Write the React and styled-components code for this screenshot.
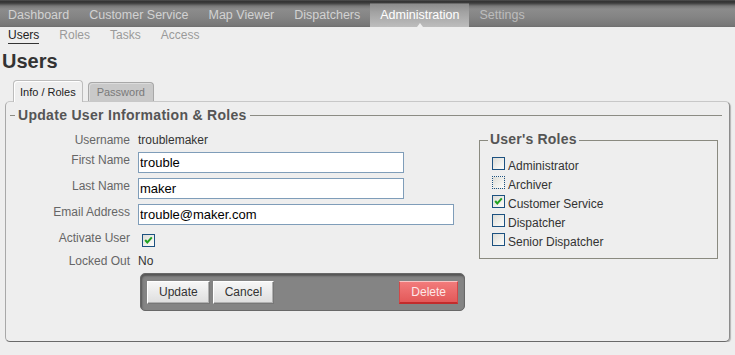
import React from 'react';
import styled, { createGlobalStyle, css } from 'styled-components';

const GlobalStyle = createGlobalStyle`
  html, body { margin: 0; padding: 0; background: #eeeeee; }
  body { font-family: "Liberation Sans", Arial, Helvetica, sans-serif; color: #333; }
  * { box-sizing: border-box; }
`;

const Nav = styled.nav`
  display: flex;
  height: 27px;
  background: linear-gradient(to bottom, #5e5e5e 0px, #333 1px, #3c3c3c 3px, #787878 6px, #8c8c8c 9px, #858585 16px, #787878 25px, #6e6e6e 27px);
`;

const NavItem = styled.a`
  position: relative;
  display: block;
  height: 27px;
  padding: 3px 10px 0;
  line-height: 24px;
  font-size: 12.5px;
  text-decoration: none;
  white-space: nowrap;
  color: ${(p) => (p.$active ? '#ffffff' : p.$dim ? '#bcbcbc' : '#d2d2d2')};
  &:first-child { padding-left: 8px; }
  ${(p) =>
    p.$active &&
    css`
      background: linear-gradient(to bottom, transparent 0px, transparent 3px, #8c8c8c 4px, #a2a2a2 12px, #bdbdbd 27px);
      &::after {
        content: '';
        position: absolute;
        left: 50%;
        bottom: 0;
        margin-left: -3px;
        border-left: 3px solid transparent;
        border-right: 3px solid transparent;
        border-bottom: 4px solid #eeeeee;
      }
    `}
`;

const SubNav = styled.div`
  display: flex;
  gap: 20px;
  height: 18px;
  padding: 0 8px;
`;

const SubNavItem = styled.a`
  display: block;
  height: 17px;
  padding-top: 1px;
  font-size: 12px;
  line-height: 15px;
  text-decoration: none;
  color: ${(p) => (p.$active ? '#222' : '#9a9a9a')};
  border-bottom: 1px solid ${(p) => (p.$active ? '#333' : 'transparent')};
`;

const PageTitle = styled.h1`
  margin: 4px 0 7px 2px;
  font-size: 20px;
  line-height: 24px;
  font-weight: bold;
  color: #333;
`;

const TabBar = styled.div`
  display: flex;
  align-items: flex-end;
  gap: 5px;
  padding-left: 13px;
`;

const Tab = styled.div`
  position: relative;
  z-index: 1;
  font-size: 11px;
  line-height: 13px;
  white-space: nowrap;
  border: 1px solid ${(p) => (p.$active ? '#bcbcbc' : '#a8a8a8')};
  border-bottom: none;
  border-radius: 4px 4px 0 0;
  padding: ${(p) => (p.$active ? '5px 6px 3px' : '3px 8px 2px')};
  margin-bottom: ${(p) => (p.$active ? '-1px' : '0')};
  background: ${(p) => (p.$active ? '#eeeeee' : '#c9c9c9')};
  color: ${(p) => (p.$active ? '#222' : '#7a7a7a')};
  box-shadow: inset 1px 1px 0 ${(p) => (p.$active ? '#ffffff' : '#dcdcdc')};
`;

const Panel = styled.div`
  margin: 0 5px;
  padding: 5px 7px 30px 4px;
  border: 1px solid #a8a8a8;
  border-top-color: #c8c8c8;
  border-right-color: #8c8c8c;
  border-bottom-color: #6a6a6a;
  border-radius: 5px;
  background: #eeeeee;
  box-shadow: 1px 1px 1px rgba(0, 0, 0, 0.25);
`;

const Section = styled.fieldset`
  margin: 0;
  min-width: 0;
  border: 0;
  border-top: 1px solid #8c8c84;
  padding: 9px 4px 0 5px;
`;

const Legend = styled.legend`
  padding: ${(p) => (p.$small ? '0 2px 2px' : '0 3px')};
  font-size: 14px;
  line-height: 16px;
  font-weight: bold;
  color: #555;
  letter-spacing: ${(p) => (p.$small ? '0.2px' : '0.3px')};
`;

const Columns = styled.div`
  display: flex;
  align-items: flex-start;
`;

const Form = styled.div`
  flex: 1;
  display: grid;
  grid-template-columns: 115px 1fr;
  column-gap: 8px;
  row-gap: 5px;
  align-items: start;
  justify-items: start;
`;

const Label = styled.div`
  justify-self: end;
  padding-top: 1px;
  font-size: 12px;
  line-height: 14px;
  text-align: right;
  color: #666;
  white-space: nowrap;
`;

const Value = styled.div`
  padding-top: 1px;
  font-size: 12px;
  line-height: 14px;
  color: #333;
`;

const Input = styled.input`
  display: block;
  width: ${(p) => (p.$wide ? '316px' : '266px')};
  height: 21px;
  margin: 0;
  padding: 0 1px;
  border: 1px solid #7f9db9;
  background: #fff;
  font-family: "Liberation Sans", Arial, sans-serif;
  font-size: 13px;
  color: #000;
  outline: none;
`;

const Box = styled.span`
  display: flex;
  align-items: center;
  justify-content: center;
  flex: none;
  width: 13px;
  height: 13px;
  margin: ${(p) => (p.$inForm ? '4px 0 1px 4px' : '0 0 0 4px')};
  border: 1px ${(p) => (p.$focus ? 'dotted' : 'solid')} #1c5180;
  background: linear-gradient(135deg, #dcdcd7 0%, #f4f4f1 70%, #fbfbf9 100%);
`;

const ButtonBar = styled.div`
  grid-column: 2;
  display: flex;
  align-items: center;
  gap: 3px;
  width: 325px;
  height: 38px;
  margin: 0 0 0 2px;
  padding: 0 6px;
  border: 1px solid #686868;
  border-radius: 5px;
  background: #848484;
  box-shadow: inset 1px 2px 2px #555;
`;

const Button = styled.button`
  height: 23px;
  margin: 0;
  padding: 0 11px;
  font-family: "Liberation Sans", Arial, sans-serif;
  font-size: 12px;
  line-height: 20px;
  cursor: pointer;
  ${(p) =>
    p.$danger
      ? css`
          margin-left: auto;
          color: #fde8e8;
          background: linear-gradient(to bottom, #f27b7b, #e35959);
          border: 1px solid #d24848;
          border-top-color: #f8c4c4;
          border-bottom: 2px solid #c22c2c;
        `
      : css`
          color: #333;
          background: linear-gradient(to bottom, #f6f6f6, #dedede);
          border: 1px solid #777;
          border-top-color: #fff;
          border-left-color: #fff;
          box-shadow: inset -1px -1px 0 #b0b0b0;
        `}
`;

const Roles = styled.fieldset`
  flex: none;
  width: 239px;
  margin: -1px 0 0;
  min-width: 0;
  padding: 8px 4px 6px 8px;
  border: 1px solid #8a8a80;
`;

const RoleItem = styled.div`
  display: flex;
  align-items: flex-start;
  height: 19px;
`;

const RoleLabel = styled.span`
  margin-left: 3px;
  padding-top: 1.5px;
  font-size: 12px;
  line-height: 14px;
  color: #333;
  white-space: nowrap;
`;

const Check = () => (
  <svg width="11" height="11" viewBox="0 0 11 11">
    <polyline points="2.2,5 4.3,7.4 8.8,2.4" fill="none" stroke="#21a121" strokeWidth="2" />
  </svg>
);

const CheckBox = ({ checked, focus, inForm }) => (
  <Box $focus={focus} $inForm={inForm}>{checked && <Check />}</Box>
);

const navItems = ['Dashboard', 'Customer Service', 'Map Viewer', 'Dispatchers', 'Administration', 'Settings'];
const subItems = ['Users', 'Roles', 'Tasks', 'Access'];
const roles = [
  { name: 'Administrator' },
  { name: 'Archiver', focus: true },
  { name: 'Customer Service', checked: true },
  { name: 'Dispatcher' },
  { name: 'Senior Dispatcher' },
];

export default function App() {
  return (
    <>
      <GlobalStyle />
      <Nav>
        {navItems.map((n) => (
          <NavItem key={n} $active={n === 'Administration'} $dim={n === 'Settings'}>
            {n}
          </NavItem>
        ))}
      </Nav>
      <SubNav>
        {subItems.map((s) => (
          <SubNavItem key={s} $active={s === 'Users'}>
            {s}
          </SubNavItem>
        ))}
      </SubNav>
      <PageTitle>Users</PageTitle>
      <TabBar>
        <Tab $active>Info / Roles</Tab>
        <Tab>Password</Tab>
      </TabBar>
      <Panel>
        <Section>
          <Legend>Update User Information &amp; Roles</Legend>
          <Columns>
            <Form>
              <Label>Username</Label>
              <Value>troublemaker</Value>
              <Label>First Name</Label>
              <Input defaultValue="trouble" />
              <Label>Last Name</Label>
              <Input defaultValue="maker" />
              <Label>Email Address</Label>
              <Input $wide defaultValue="trouble@maker.com" />
              <Label>Activate User</Label>
              <CheckBox checked inForm />
              <Label>Locked Out</Label>
              <Value>No</Value>
              <ButtonBar>
                <Button>Update</Button>
                <Button>Cancel</Button>
                <Button $danger>Delete</Button>
              </ButtonBar>
            </Form>
            <Roles>
              <Legend $small>User's Roles</Legend>
              {roles.map((r) => (
                <RoleItem key={r.name}>
                  <CheckBox checked={r.checked} focus={r.focus} />
                  <RoleLabel>{r.name}</RoleLabel>
                </RoleItem>
              ))}
            </Roles>
          </Columns>
        </Section>
      </Panel>
    </>
  );
}
